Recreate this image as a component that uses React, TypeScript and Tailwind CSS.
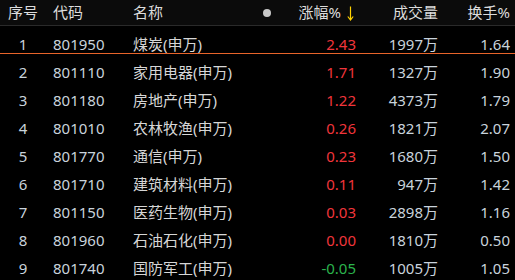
const ROWS = [
  { no: 1, code: '801950', name: '煤炭(申万)', chg: '2.43', vol: '1997万', turn: '1.64' },
  { no: 2, code: '801110', name: '家用电器(申万)', chg: '1.71', vol: '1327万', turn: '1.90' },
  { no: 3, code: '801180', name: '房地产(申万)', chg: '1.22', vol: '4373万', turn: '1.79' },
  { no: 4, code: '801010', name: '农林牧渔(申万)', chg: '0.26', vol: '1821万', turn: '2.07' },
  { no: 5, code: '801770', name: '通信(申万)', chg: '0.23', vol: '1680万', turn: '1.50' },
  { no: 6, code: '801710', name: '建筑材料(申万)', chg: '0.11', vol: '947万', turn: '1.42' },
  { no: 7, code: '801150', name: '医药生物(申万)', chg: '0.03', vol: '2898万', turn: '1.16' },
  { no: 8, code: '801960', name: '石油石化(申万)', chg: '0.00', vol: '1810万', turn: '0.50' },
  { no: 9, code: '801740', name: '国防军工(申万)', chg: '-0.05', vol: '1005万', turn: '1.05' },
]

const FONT = { fontFamily: '"Noto Sans", "Noto Sans CJK SC", sans-serif' }

function SortArrow() {
  return (
    <svg width="7" height="15" viewBox="0 0 7 15" className="ml-[6px] mt-[1px]">
      <path d="M3.5 0.5V14M0.8 10.5L3.5 14L6.2 10.5" fill="none" stroke="#ffd200" strokeWidth="1.2" />
    </svg>
  )
}

export default function App() {
  return (
    <div className="w-[515px] h-[280px] overflow-hidden bg-black text-[15px] text-[#d6d6d6]" style={FONT}>
      {/* ── header ── */}
      <div className="flex items-center h-[26px] bg-[#0b0b0b] border-b border-[#2a2a2a] text-[#dcdcdc]">
        <div className="w-[46px] text-center">序号</div>
        <div className="w-[87px] pl-[7px]">代码</div>
        <div className="w-[127px]">名称</div>
        <div className="w-[96px] flex items-center">
          <span className="w-[8px] h-[8px] rounded-full bg-[#c8c8c8] ml-[3px]" />
          <span className="ml-auto">涨幅%</span>
          <SortArrow />
          <span className="w-[2px]" />
        </div>
        <div className="w-[82px] text-right">成交量</div>
        <div className="w-[72px] text-right">换手%</div>
      </div>

      {/* ── rows ── */}
      {ROWS.map((r, i) => {
        const c = r.chg.startsWith('-') ? 'text-[#2bb34c]' : 'text-[#f0353b]'
        return (
          <div
            key={r.code}
            className={`flex items-center h-[28px] pt-[9px] border-b ${i === 0 ? 'border-[#e8642a]' : 'border-transparent'}`}
          >
            <div className="w-[46px] text-center text-[#c9d3dc]">{r.no}</div>
            <div className="w-[87px] pl-[7px] text-[#c9d3dc]">{r.code}</div>
            <div className="w-[127px]">{r.name}</div>
            <div className={`w-[96px] text-right ${c}`}>{r.chg}</div>
            <div className="w-[82px] text-right text-[#c9d3dc]">{r.vol}</div>
            <div className="w-[72px] text-right text-[#c9d3dc]">{r.turn}</div>
          </div>
        )
      })}
    </div>
  )
}
